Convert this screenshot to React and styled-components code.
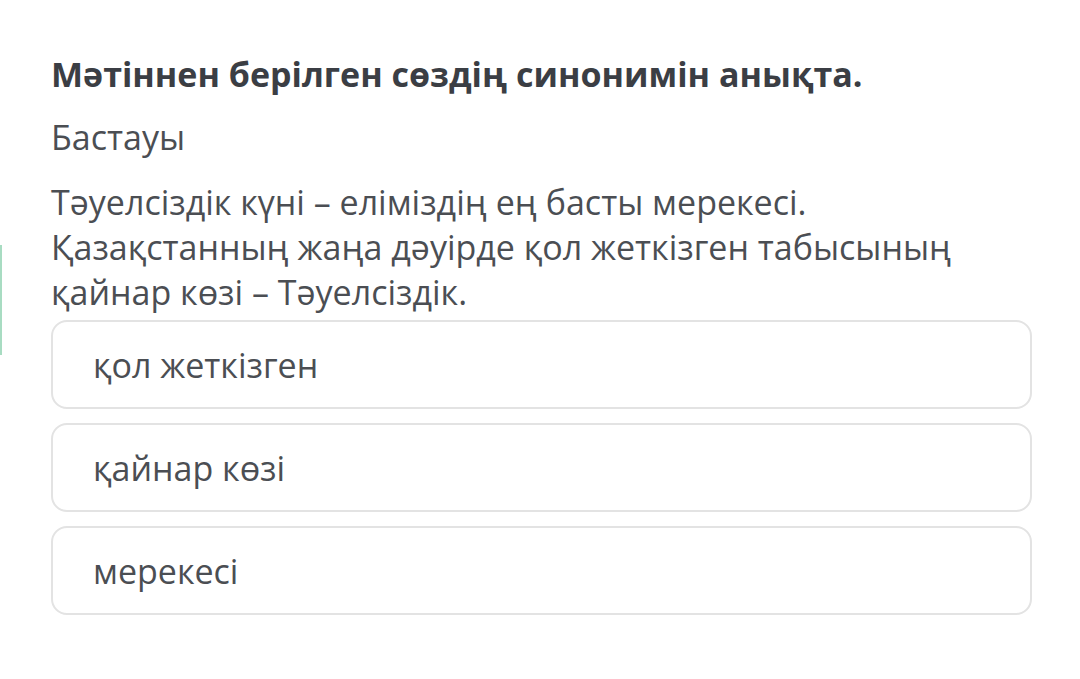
import React from "react";
import styled, { createGlobalStyle } from "styled-components";

const Global = createGlobalStyle`
  html, body { margin: 0; padding: 0; background: #ffffff; }
  body { font-family: "Open Sans", "Noto Sans", sans-serif; }
`;

const Page = styled.div`
  display: flex;
  width: 1080px;
  height: 679px;
  background: #fff;
  overflow: hidden;
`;

const EdgeStrip = styled.div`
  flex: none;
  width: 2px;
  height: 110px;
  margin-top: 245px;
  background: #a8dcc2;
`;

const Content = styled.main`
  flex: 1;
  padding: 51px 48px 0 49px;
  display: flex;
  flex-direction: column;
`;

const Title = styled.h1`
  margin: 0;
  font-size: 34px;
  line-height: 46px;
  font-weight: 700;
  color: #3b3e44;
  white-space: nowrap;
`;

const Subtitle = styled.div`
  margin-top: 17px;
  font-size: 34px;
  line-height: 46px;
  color: #4b4e53;
`;

const Passage = styled.p`
  margin: 20px 0 0;
  font-size: 34px;
  line-height: 45px;
  color: #4b4e53;
  white-space: nowrap;
`;

const Options = styled.div`
  display: flex;
  flex-direction: column;
  gap: 14px;
  margin-top: 5px;
`;

const Option = styled.button`
  display: flex;
  align-items: center;
  height: 89px;
  padding: 0 0 0 40px;
  border: 2px solid #e3e3e3;
  border-radius: 16px;
  background: #fff;
  font-family: inherit;
  font-size: 34px;
  color: #4b4e53;
  text-align: left;
  cursor: pointer;
`;

const options = ["қол жеткізген", "қайнар көзі", "мерекесі"];

export default function App() {
  return (
    <>
      <Global />
      <Page>
        <EdgeStrip />
        <Content>
          <Title>Мәтіннен берілген сөздің синонимін анықта.</Title>
          <Subtitle>Бастауы</Subtitle>
          <Passage>
            Тәуелсіздік күні – еліміздің ең басты мерекесі.
            <br />
            Қазақстанның жаңа дәуірде қол жеткізген табысының
            <br />
            қайнар көзі – Тәуелсіздік.
          </Passage>
          <Options>
            {options.map((o) => (
              <Option key={o}>{o}</Option>
            ))}
          </Options>
        </Content>
      </Page>
    </>
  );
}
